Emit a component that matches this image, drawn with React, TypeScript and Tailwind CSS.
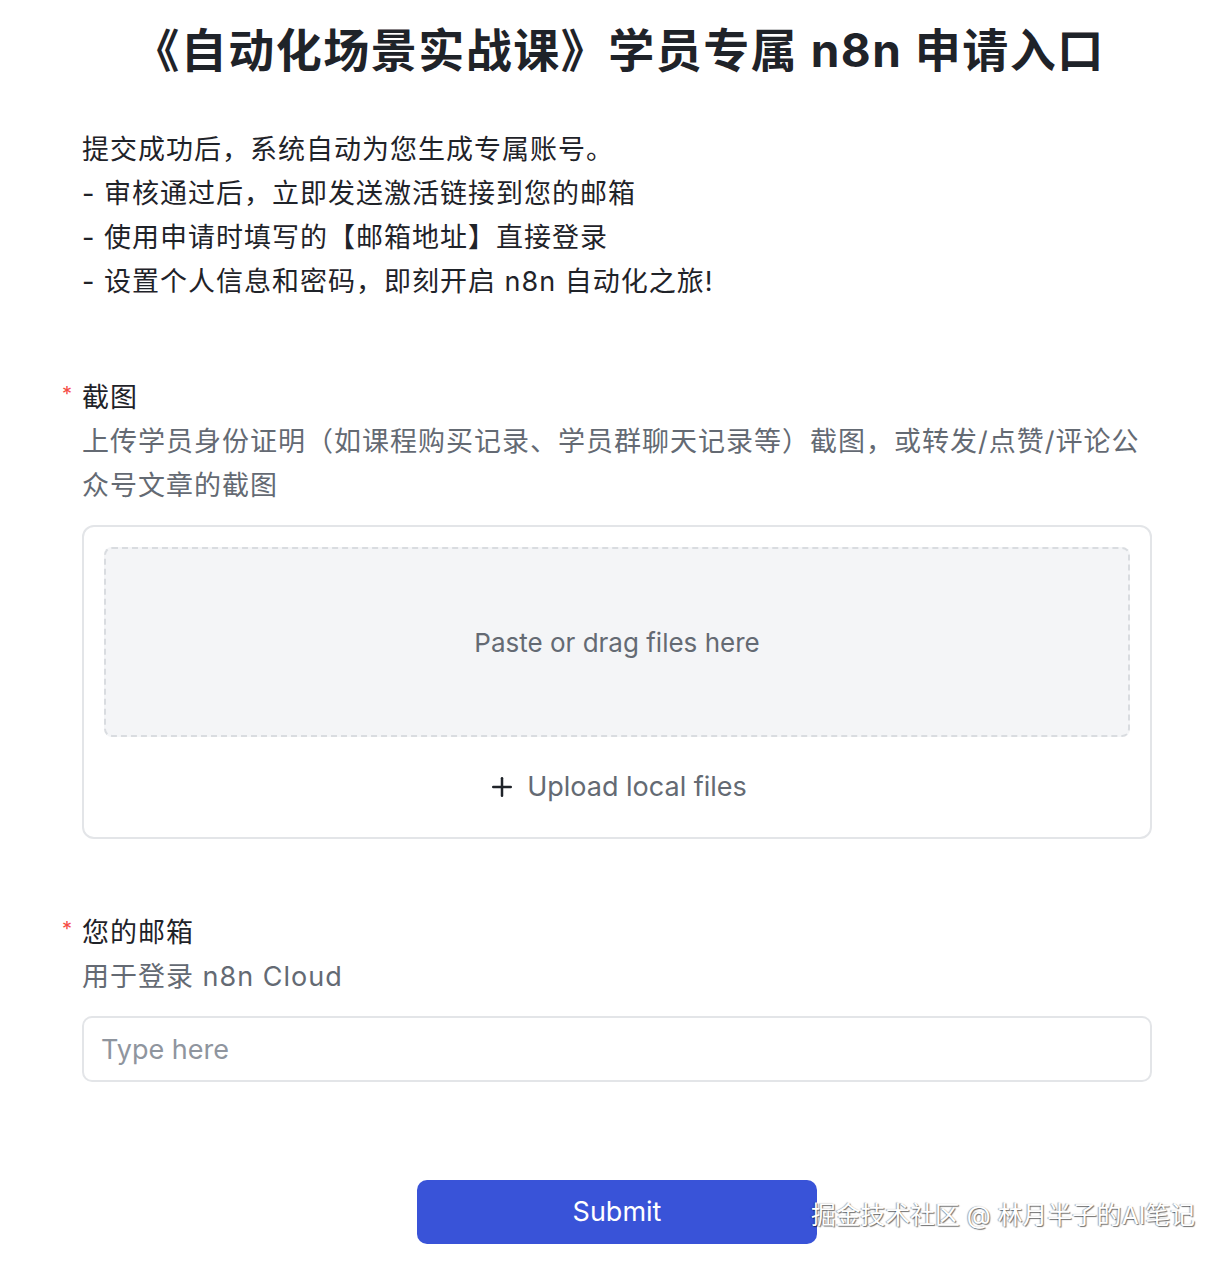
import { Plus } from "lucide-react";

const font = "font-['Inter','Noto_Sans_CJK_SC',sans-serif]";

function FieldLabel({ label, hint }: { label: string; hint: string }) {
  return (
    <div className="text-[27px] leading-[44px] tracking-[1px]">
      <div className="flex items-center -ml-[22px]">
        <span className="w-[22px] text-[20px] leading-none text-[#f54a45] pl-[2px] -mt-[8px]">*</span>
        <span className="text-[#1f2329]">{label}</span>
      </div>
      <p className="text-[#646a73]">{hint}</p>
    </div>
  );
}

export default function App() {
  return (
    <div className={`relative min-h-[1262px] bg-white ${font}`}>
      <h1 className="pt-[22px] text-center text-[46px] leading-[56px] font-bold tracking-[1.5px] text-[#1f2329] pl-[10px]">
        《自动化场景实战课》学员专属 n8n 申请入口
      </h1>

      <div className="ml-[82px] w-[1070px]">
        <div className="mt-[50px] text-[27px] leading-[44px] tracking-[1px] text-[#1f2329]">
          <p>提交成功后，系统自动为您生成专属账号。</p>
          <p>- 审核通过后，立即发送激活链接到您的邮箱</p>
          <p>- 使用申请时填写的【邮箱地址】直接登录</p>
          <p>- 设置个人信息和密码，即刻开启 n8n 自动化之旅!</p>
        </div>

        <div className="mt-[72px]">
          <FieldLabel
            label="截图"
            hint="上传学员身份证明（如课程购买记录、学员群聊天记录等）截图，或转发/点赞/评论公众号文章的截图"
          />
          <div className="mt-[17px] rounded-[12px] border-2 border-[#e3e5e8] p-[20px] pb-0">
            <div className="flex h-[190px] items-center justify-center rounded-[8px] border-2 border-dashed border-[#d9dce0] bg-[#f4f5f7] text-[26px] text-[#646a73]">
              Paste or drag files here
            </div>
            <div className="flex h-[100px] items-center justify-center gap-[10px] text-[27px] text-[#646a73]">
              <Plus className="h-[30px] w-[30px] text-[#1f2329]" strokeWidth={2} />
              <span>Upload local files</span>
            </div>
          </div>
        </div>

        <div className="mt-[72px]">
          <FieldLabel label="您的邮箱" hint="用于登录 n8n Cloud" />
          <input
            type="text"
            placeholder="Type here"
            className="mt-[17px] h-[66px] w-full rounded-[10px] border-2 border-[#e3e5e8] px-[17px] text-[27px] text-[#1f2329] outline-none placeholder:text-[#8f959e]"
          />
        </div>

        <div className="mt-[98px] flex justify-center pb-[17px]">
          <button
            type="button"
            className="h-[64px] w-[400px] rounded-[10px] bg-[#3953d8] text-[27px] text-white"
          >
            Submit
          </button>
        </div>
      </div>

      <div className="absolute left-[811px] top-[1197px] text-[24.8px] leading-[36px] text-white [text-shadow:1px_1px_1px_rgba(0,0,0,0.55),-1px_0_1px_rgba(0,0,0,0.35)]">
        掘金技术社区 @ 林月半子的AI笔记
      </div>
    </div>
  );
}
